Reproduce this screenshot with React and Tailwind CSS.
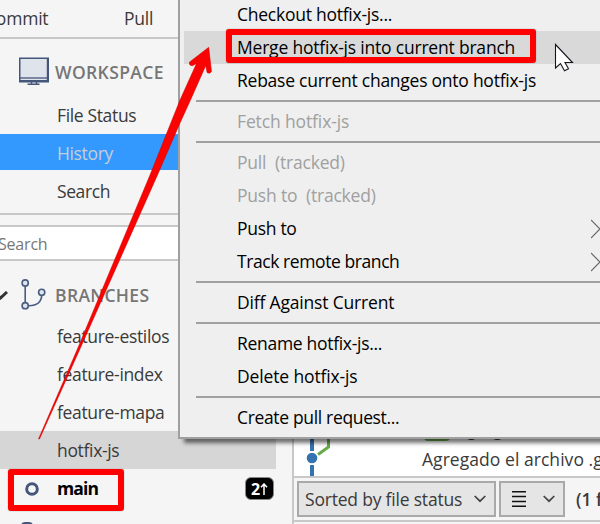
import React from "react";

const menu = [
  { label: "Checkout hotfix-js...", fit: "tracking-[-0.25px]" },
  { label: "Merge hotfix-js into current branch", fit: "tracking-[-0.2px]", active: true },
  { label: "Rebase current changes onto hotfix-js", fit: "tracking-[-0.25px]" },
  null,
  { label: "Fetch hotfix-js", fit: "tracking-[-0.13px]", disabled: true },
  null,
  { label: "Pull  (tracked)", fit: "tracking-[-0.2px]", disabled: true },
  { label: "Push to  (tracked)", fit: "tracking-[-0.2px]", disabled: true },
  { label: "Push to", fit: "tracking-[-0.3px]", sub: true },
  { label: "Track remote branch", fit: "tracking-[-0.42px]", sub: true },
  null,
  { label: "Diff Against Current", fit: "tracking-[-0.18px]" },
  null,
  { label: "Rename hotfix-js...", fit: "tracking-[-0.3px]" },
  { label: "Delete hotfix-js", fit: "tracking-[-0.14px]" },
  null,
  { label: "Create pull request...", fit: "tracking-[-0.34px]" },
];

function MenuItem({ label, fit, active, disabled, sub }) {
  return (
    <div className={`ml-1 flex h-[33px] shrink-0 items-center justify-between pl-[53px] ${active ? "bg-[#d9d9d9]" : ""} ${disabled ? "text-[#a0a0a0]" : "text-black"}`}>
      <span className={fit}>{label}</span>
      {sub && (
        <svg width="9" height="20" viewBox="0 0 9 20" fill="none" stroke="#666" strokeWidth="1.2">
          <path d="M0 1 9 10 0 19" />
        </svg>
      )}
    </div>
  );
}

function ContextMenu() {
  return (
    <div className="absolute -top-[2px] left-[178px] flex w-[422px] flex-col border-b-2 border-l-2 border-[#a0a0a0] bg-[#efefef] pb-[3px] shadow-[5px_5px_4px_-1px_rgba(0,0,0,0.55)]">
      {menu.map((m, i) =>
        m ? (
          <MenuItem key={i} {...m} />
        ) : (
          <div key={i} className="flex h-2 shrink-0 items-center pl-4">
            <div className="h-[2px] w-full bg-[#a0a0a0]" />
          </div>
        )
      )}
    </div>
  );
}

function Chevron() {
  return (
    <svg width="12" height="8" viewBox="0 0 12 8" fill="none" stroke="#444" strokeWidth="1.7">
      <path d="M.7 1 6 6.2 11.3 1" />
    </svg>
  );
}

function Sidebar() {
  return (
    <aside className="flex w-[292px] shrink-0 flex-col">
      <div className="flex h-[39px] shrink-0 items-center border-b-2 border-[#c8c8c8] pb-[1px]">
        <span className="-ml-[15px] w-[139px] tracking-[-0.2px]">Commit</span>
        <span className="tracking-[-0.2px]">Pull</span>
      </div>
      <div className="flex h-[57px] shrink-0 items-center pl-[19px] pt-[10px]">
        <svg width="30" height="28" viewBox="0 0 30 28" className="-mt-[3px]">
          <path d="M.75 1.25h28.5v23.5H.75z" fill="#dfe3eb" stroke="#44567a" strokeWidth="1.5" />
          <path d="M0 21h30" stroke="#44567a" strokeWidth="1.3" />
          <path d="M28.8 1v24M1 24h28" stroke="#44567a" strokeWidth="2" />
          <path d="M12.5 25v2.3M17.5 25v2.3M8.5 27.3h12" stroke="#44567a" strokeWidth="1.4" />
        </svg>
        <span className="ml-1.5 font-semibold tracking-[0.37px] text-[#767676]">WORKSPACE</span>
      </div>
      <div className="flex h-[38px] shrink-0 items-center pl-[57px] pt-[1px] tracking-[-0.35px]">File Status</div>
      <div className="flex h-9 shrink-0 items-center bg-[#3399ff] pl-[57px] pt-[2px] tracking-[-0.35px] text-[#c8cdd4]">History</div>
      <div className="flex h-[45px] shrink-0 items-center border-b-2 border-[#c8c8c8] pl-[57px] tracking-[-0.4px]">Search</div>
      <div className="mt-[10px] flex h-[36px] shrink-0 items-center border-y-2 border-[#c8c8c8] bg-white pt-[2px]">
        <span className="-ml-[2px] text-base tracking-[-0.2px] text-[#777]">Search</span>
      </div>
      <div className="flex h-[56px] shrink-0 items-center pt-[13px]">
        <svg width="8" height="9" viewBox="0 0 8 9" fill="none" stroke="#333" strokeWidth="3">
          <path d="M-4 3 .5 7 7 1" />
        </svg>
        <svg className="-mt-[2px] ml-[13px]" width="25" height="31" viewBox="0 0 25 31" fill="#dfe3eb" stroke="#4a5c80" strokeWidth="1.6">
          <path d="M4.2 7v16M8 26.8c9 0 12.500-5 12.800-11" fill="none" />
          <circle cx="4.200" cy="4" r="3.100" />
          <circle cx="4.200" cy="26.700" r="3.100" />
          <circle cx="20.700" cy="13.300" r="3.100" />
        </svg>
        <span className="ml-[9px] font-semibold tracking-[0.35px] text-[#767676]">BRANCHES</span>
      </div>
      <Branch>feature-estilos</Branch>
      <Branch>feature-index</Branch>
      <Branch>feature-mapa</Branch>
      <Branch selected>hotfix-js</Branch>
      <div className="flex h-[38px] shrink-0 items-center pl-[25px] pt-[1px]">
        <svg width="14" height="14" viewBox="0 0 14 14">
          <circle cx="7" cy="7" r="5.300" fill="none" stroke="#44567a" strokeWidth="3" />
        </svg>
        <span className="ml-[18px] w-[188px] font-bold tracking-[-0.9px] text-black">main</span>
        <span className="flex h-[23px] w-[29px] items-center justify-center rounded-md border border-[#888] bg-black text-base font-bold text-white">
          2
          <svg width="8" height="12" viewBox="0 0 8 12" fill="none" stroke="white" strokeWidth="1.5">
            <path d="M4 12V1M1 4.300 4 1l3 3.300" />
          </svg>
        </span>
      </div>
      <div className="ml-[21px] mt-[15px] h-2 w-3 shrink-0 rounded-t-sm bg-[#44567a]" />
    </aside>
  );
}

function Branch({ children, selected }) {
  return (
    <div className={`flex h-[38px] w-[276px] shrink-0 items-center pl-[57px] tracking-[-0.33px] ${selected ? "bg-[#d6d6d6]" : ""}`}>
      {children}
    </div>
  );
}

function Details() {
  return (
    <main className="flex min-w-0 flex-1 flex-col border-l-2 border-[#c8c8c8]">
      <div className="flex h-[478px] shrink-0 items-end border-b-2 border-[#c8c8c8] bg-white">
        <svg className="shrink-0" width="128" height="50" viewBox="0 0 128 50" fill="none">
          <path d="M18 0v25M18 39v11" stroke="#3572b0" strokeWidth="4" />
          <path d="M34.500 0v21L24 28.500" stroke="#67ab49" strokeWidth="3" />
          <circle cx="18" cy="32" r="5.300" fill="#3572b0" />
        </svg>
        <div className="flex shrink-0 flex-col whitespace-nowrap">
          <div className="flex h-[26px] items-center gap-1.5 pl-[2px]">
            <span className="mb-[7px] h-[24px] w-[26px] rounded bg-[#67ab49]" />
            <span className="mb-[5px] tracking-[-0.2px]">Agregado index</span>
          </div>
          <span className="h-[31px] leading-[29px] tracking-[0.05px]">Agregado el archivo .gitignore</span>
        </div>
      </div>
      <div className="flex h-[44px] shrink-0 items-center gap-[3px] border-b-2 border-[#c8c8c8] pl-[3px] whitespace-nowrap">
        <div className="flex h-9 w-[199px] shrink-0 items-center justify-between border-2 border-[#a9a9a9] bg-[#e5e5e5] pl-1.5 pr-2">
          <span className="tracking-[-0.2px]">Sorted by file status</span>
          <Chevron />
        </div>
        <div className="flex h-9 w-[66px] shrink-0 items-center justify-between border-2 border-[#a9a9a9] bg-[#e5e5e5] pl-[11px] pr-2">
          <svg width="14" height="16" viewBox="0 0 14 16" stroke="#111" strokeWidth="1.500">
            <path d="M0 .75h14M0 5.500h14M0 10.500h14M0 15.200h14" />
          </svg>
          <Chevron />
        </div>
        <span className="ml-[8px] font-semibold">(1 file)</span>
      </div>
    </main>
  );
}

function Annotations() {
  return (
    <>
      <div className="absolute left-[226px] top-[29px] h-[34px] w-[310px] rounded-[3px] border-6 border-[#fe0000] shadow-[0_0_1px_#555]" />
      <div className="absolute left-[8px] top-[469px] h-[42px] w-[116px] rounded-[3px] border-6 border-[#fe0000] shadow-[0_0_1px_#555]" />
      <svg className="absolute left-0 top-0" width="600" height="524" viewBox="0 0 600 524">
        <path d="M38.500 439 77 350 150 175 180 100 196.500 63.500 192.500 65.700Q189 66 189.300 62.300L208.700 47.300 211.500 71.500Q210 74.500 207 72.500L205.800 65.500 190.500 100 180 123 157.500 175 79.500 350 39.500 439Z" fill="#fa0303" stroke="#c00" strokeWidth=".5" strokeLinejoin="round" />
        <path d="M555.500 44.500v23.500l5-4.500 4 7.300 4-2-3.500-6.300h7.500Z" fill="white" stroke="#15151f" strokeWidth="1.100" />
      </svg>
    </>
  );
}

export default function App() {
  return (
    <div className="relative flex h-[524px] w-[600px] overflow-hidden whitespace-pre bg-[#f5f5f5] font-['Open_Sans',sans-serif] text-[17.5px] text-[#3a3a3a]">
      <Sidebar />
      <Details />
      <ContextMenu />
      <Annotations />
    </div>
  );
}
